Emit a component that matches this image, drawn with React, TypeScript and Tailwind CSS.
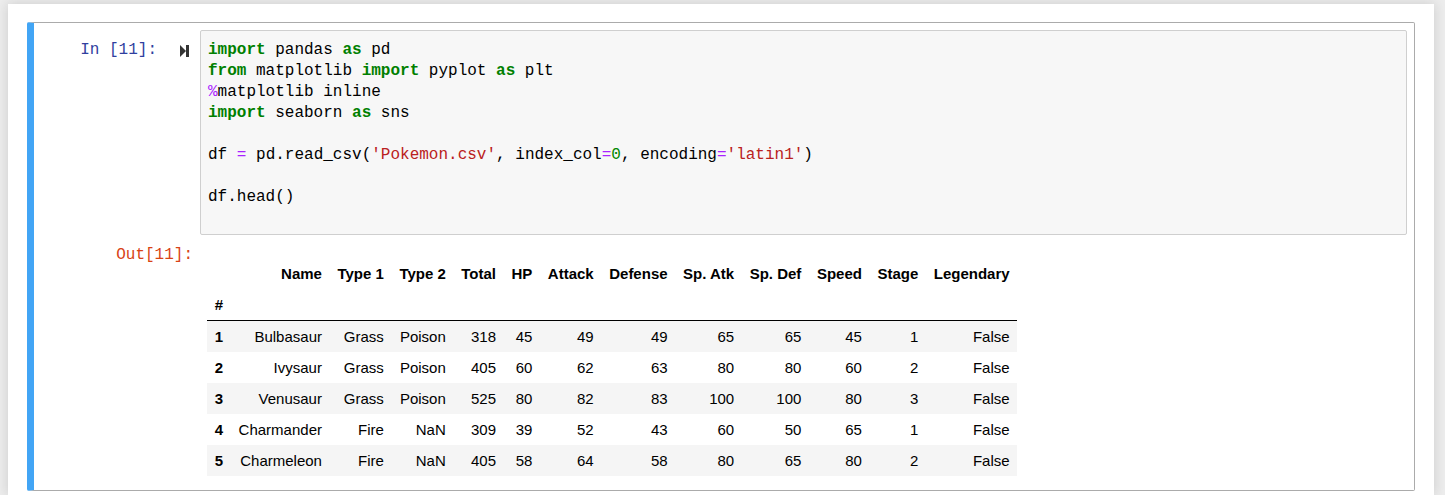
import React from "react";

const mono = { fontFamily: '"Liberation Mono", "DejaVu Sans Mono", monospace' };

const K = ({ children }: { children: React.ReactNode }) => (
  <span className="font-bold text-[#008000]">{children}</span>
);
const O = ({ children }: { children: React.ReactNode }) => (
  <span className="text-[#aa22ff]">{children}</span>
);
const S = ({ children }: { children: React.ReactNode }) => (
  <span className="text-[#ba2121]">{children}</span>
);
const N = ({ children }: { children: React.ReactNode }) => (
  <span className="text-[#008800]">{children}</span>
);

const cols = ["Name", "Type 1", "Type 2", "Total", "HP", "Attack", "Defense", "Sp. Atk", "Sp. Def", "Speed", "Stage", "Legendary"];

const rows: (string | number)[][] = [
  [1, "Bulbasaur", "Grass", "Poison", 318, 45, 49, 49, 65, 65, 45, 1, "False"],
  [2, "Ivysaur", "Grass", "Poison", 405, 60, 62, 63, 80, 80, 60, 2, "False"],
  [3, "Venusaur", "Grass", "Poison", 525, 80, 82, 83, 100, 100, 80, 3, "False"],
  [4, "Charmander", "Fire", "NaN", 309, 39, 52, 43, 60, 50, 65, 1, "False"],
  [5, "Charmeleon", "Fire", "NaN", 405, 58, 64, 58, 80, 65, 80, 2, "False"],
];

export default function App() {
  return (
    <div className="w-[1445px] h-[495px] bg-[#eeeeee] overflow-hidden pt-[4px] pl-[8px]">
      <div className="w-[1426px] h-[491px] bg-white shadow-[0_0_12px_1px_rgba(87,87,87,0.2)] pl-[19px] pt-[18px]">
        <div className="w-[1388px] border border-[#ababab] border-l-[7px] border-l-[#42a5f5] rounded-[2px] pt-[7px] pr-[7px] pb-[8px]">
          {/* input row */}
          <div className="flex">
            <div
              className="w-[166px] shrink-0 flex justify-end items-start pt-[10px] pr-[11px] text-[16px] leading-[21px] text-[#303f9f]"
              style={mono}
            >
              <span className="whitespace-pre">In [11]:</span>
              <span className="h-[21px] flex items-center ml-[23px]">
                <svg width="9" height="12" viewBox="0 0 9 12">
                  <polygon points="0,0 6,6 0,12" fill="#333333" />
                  <rect x="6" y="0" width="3" height="12" fill="#333333" />
                </svg>
              </span>
            </div>
            <div className="flex-1 bg-[#f7f7f7] border border-[#cfcfcf] rounded-[2px] px-[7px] pt-[9px] pb-[5px]">
              <pre className="text-[16px] leading-[21px] text-black m-0" style={mono}>
                <K>import</K> pandas <K>as</K> pd{"\n"}
                <K>from</K> matplotlib <K>import</K> pyplot <K>as</K> plt{"\n"}
                <O>%</O>matplotlib inline{"\n"}
                <K>import</K> seaborn <K>as</K> sns{"\n"}
                {"\n"}
                df <O>=</O> pd.read_csv(<S>'Pokemon.csv'</S>, index_col<O>=</O><N>0</N>, encoding<O>=</O><S>'latin1'</S>){"\n"}
                {"\n"}
                df.head(){"\n"}
                {" "}
              </pre>
            </div>
          </div>
          {/* output row */}
          <div className="flex">
            <div
              className="w-[166px] shrink-0 text-right pt-[10px] pr-[7px] text-[16px] leading-[21px] text-[#d84315]"
              style={mono}
            >
              Out[11]:
            </div>
            <div className="pl-[7px] pt-[23px] pb-[6px]">
              <table
                className="border-collapse text-[15px] leading-[17px] text-black"
                style={{ fontFamily: '"Liberation Sans", Arial, sans-serif' }}
              >
                <thead className="border-b border-black">
                  <tr>
                    <th className="px-[7.75px] py-[7px]"></th>
                    {cols.map((c) => (
                      <th key={c} className="px-[7.75px] py-[7px] text-right font-bold whitespace-nowrap">
                        {c}
                      </th>
                    ))}
                  </tr>
                  <tr>
                    <th className="px-[7.75px] py-[7px] text-left font-bold">#</th>
                    {cols.map((c) => (
                      <th key={c} className="px-[7.75px] py-[7px]"></th>
                    ))}
                  </tr>
                </thead>
                <tbody>
                  {rows.map((r, i) => (
                    <tr key={i} className={i % 2 === 0 ? "bg-[#f5f5f5]" : "bg-white"}>
                      <th className="px-[7.75px] py-[7px] text-left font-bold">{r[0]}</th>
                      {r.slice(1).map((v, j) => (
                        <td key={j} className="px-[7.75px] py-[7px] text-right whitespace-nowrap">
                          {v}
                        </td>
                      ))}
                    </tr>
                  ))}
                </tbody>
              </table>
            </div>
          </div>
        </div>
      </div>
    </div>
  );
}
